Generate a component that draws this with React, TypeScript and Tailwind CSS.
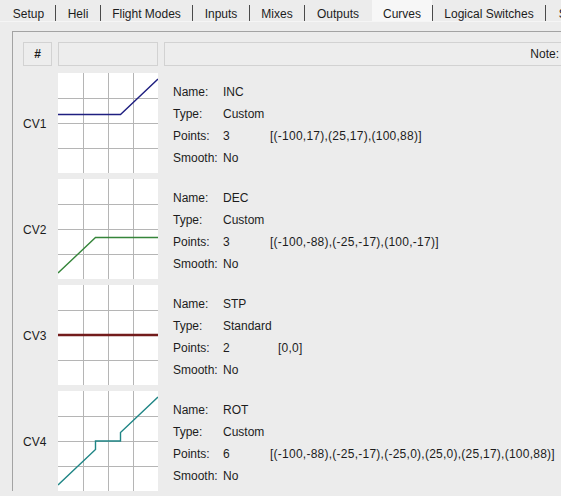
const tabs = [
  { label: "Setup", width: 53 },
  { label: "Heli", width: 44 },
  { label: "Flight Modes", width: 91 },
  { label: "Inputs", width: 56 },
  { label: "Mixes", width: 54 },
  { label: "Outputs", width: 66 },
  { label: "Curves", width: 60, active: true },
  { label: "Logical Switches", width: 112 },
  { label: "Special Functions", width: 120 },
];

type Curve = {
  id: string;
  name: string;
  type: string;
  points: string;
  list: string;
  listOffset?: boolean;
  color: string;
  thick?: boolean;
  path: [number, number][];
};

// curve coords in -100..100, mapped to the 100x100 graph
const curves: Curve[] = [
  {
    id: "CV1",
    name: "INC",
    type: "Custom",
    points: "3",
    list: "[(-100,17),(25,17),(100,88)]",
    color: "#1f1f80",
    path: [
      [-100, 17],
      [25, 17],
      [100, 88],
    ],
  },
  {
    id: "CV2",
    name: "DEC",
    type: "Custom",
    points: "3",
    list: "[(-100,-88),(-25,-17),(100,-17)]",
    color: "#35853a",
    path: [
      [-100, -88],
      [-25, -17],
      [100, -17],
    ],
  },
  {
    id: "CV3",
    name: "STP",
    type: "Standard",
    points: "2",
    list: "[0,0]",
    listOffset: true,
    color: "#731c1c",
    thick: true,
    path: [
      [-100, 0],
      [100, 0],
    ],
  },
  {
    id: "CV4",
    name: "ROT",
    type: "Custom",
    points: "6",
    list: "[(-100,-88),(-25,-17),(-25,0),(25,0),(25,17),(100,88)]",
    color: "#1f8585",
    path: [
      [-100, -88],
      [-25, -17],
      [-25, 0],
      [25, 0],
      [25, 17],
      [100, 88],
    ],
  },
];

function CurveGraph({ curve }: { curve: Curve }) {
  const pts = curve.path
    .map(([x, y]) => `${(x + 100) / 2},${(100 - y) / 2}`)
    .join(" ");
  return (
    <svg width="100" height="100" viewBox="0 0 100 100" className="block bg-white">
      {[25.5, 50.5, 75.5].map((p) => (
        <g key={p}>
          <line x1={p} y1="0" x2={p} y2="100" stroke="#b5b5b5" strokeWidth="1" />
          <line x1="0" y1={p} x2="100" y2={p} stroke="#b5b5b5" strokeWidth="1" />
        </g>
      ))}
      <polyline
        points={pts}
        fill="none"
        stroke={curve.color}
        strokeWidth={curve.thick ? 2.5 : 1.4}
      />
    </svg>
  );
}

function InfoLine({ label, children }: { label: string; children: React.ReactNode }) {
  return (
    <div className="flex h-[22px] items-center whitespace-nowrap">
      <span className="w-[50px] shrink-0">{label}</span>
      {children}
    </div>
  );
}

export default function App() {
  return (
    <div className="h-[496px] w-[561px] overflow-hidden bg-[#ececec] font-['Liberation_Sans',Arial,sans-serif] text-[12px] text-[#1c1c1c]">
      {/* Tab bar */}
      <div className="flex h-[22px] items-stretch border-b border-[#f5f5f5] pl-[2px] whitespace-nowrap">
        {tabs.map((t, i) => (
          <div key={t.label} className="flex shrink-0 items-stretch">
            <div
              style={{ width: t.width }}
              className={`flex shrink-0 items-center justify-center pt-[6px] ${
                t.active ? "bg-[#f7f7f7]" : ""
              }`}
            >
              {t.label}
            </div>
            {i < tabs.length - 1 && (
              <div className="flex w-px shrink-0 items-center pt-[4px]">
                <div
                  className={`h-[16px] w-px rounded-b-sm ${
                    t.label === "Outputs" ? "bg-transparent" : "bg-[#4a4a4a]"
                  }`}
                />
              </div>
            )}
          </div>
        ))}
      </div>

      {/* Pane */}
      <div className="pl-[12px] pt-[9px]">
        <div className="w-[620px] border-l border-t border-[#a3a3a3] pl-[10px] pt-[10px]">
          {/* Header */}
          <div className="flex gap-[6px]">
            <div className="flex h-[24px] w-[29px] items-center justify-center border border-[#d2d2d2] bg-[#ededed] font-bold">
              #
            </div>
            <div className="h-[24px] w-[100px] border border-[#d2d2d2] bg-[#ededed]" />
            <div className="flex h-[24px] w-[402px] items-center justify-end border border-[#d2d2d2] bg-[#ededed] pr-[6px]">
              Note:
            </div>
          </div>

          {/* Curve rows */}
          <div className="mt-[7px] flex flex-col gap-[6px]">
            {curves.map((c) => (
              <div key={c.id} className="flex h-[100px] gap-[6px]">
                <div className="flex w-[29px] shrink-0 items-center pt-[2px]">{c.id}</div>
                <div className="w-[100px] shrink-0">
                  <CurveGraph curve={c} />
                </div>
                <div className="flex flex-col justify-center pl-[9px] pt-[4px]">
                  <InfoLine label="Name:">{c.name}</InfoLine>
                  <InfoLine label="Type:">{c.type}</InfoLine>
                  <InfoLine label="Points:">
                    <span className="w-[47px] shrink-0">{c.points}</span>
                    <span className={`tracking-[0.25px] ${c.listOffset ? "ml-[8px]" : ""}`}>
                      {c.list}
                    </span>
                  </InfoLine>
                  <InfoLine label="Smooth:">No</InfoLine>
                </div>
              </div>
            ))}
          </div>
        </div>
      </div>
    </div>
  );
}
